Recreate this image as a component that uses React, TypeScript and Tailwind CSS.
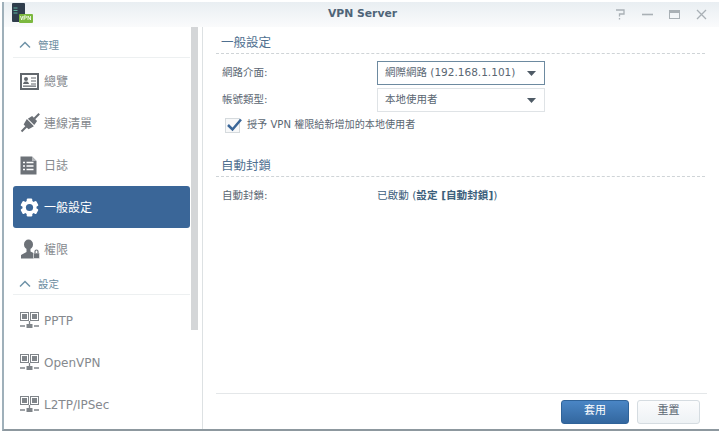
import { ReactNode } from "react";

const FONT = "font-['DejaVu_Sans','Noto_Sans_CJK_TC',sans-serif]";

function OverviewIcon() {
  return (
    <svg width="19" height="17" viewBox="0 0 19 17">
      <rect x="1" y="1" width="17" height="15" fill="#fff" stroke="#62676d" strokeWidth="2" />
      <circle cx="6" cy="6" r="2" fill="#62676d" />
      <path d="M3 11c.4-2 1.500-2.500 3-2.500s2.600.5 3 2.500z" fill="#62676d" />
      <path d="M11 5h5M11 8h5M11 11h5M3 13.200h13" stroke="#62676d" strokeWidth="1.200" />
    </svg>
  );
}

function PlugIcon() {
  return (
    <svg width="20" height="20" viewBox="0 0 20 20">
      <g transform="rotate(45 10 10)" fill="#6a6f75">
        <rect x="9" y="-3" width="2" height="7" />
        <path d="M6.500 3.500h7l1 5h-9z" />
        <path d="M5 9.500h10l-1.500 6h-7z" />
        <rect x="9" y="15" width="2" height="7" />
      </g>
    </svg>
  );
}

function LogIcon() {
  return (
    <svg width="17" height="19" viewBox="0 0 17 19">
      <path d="M0.500 0.500h11.500l4.500 4.500v13.500h-16z" fill="#6d7278" />
      <path d="M12 0.500l4.500 4.500h-4.500z" fill="#b5b8bb" />
      <path d="M6.500 6.500h7M6.500 10h7M6.500 13.500h7M3 6.500h2M3 10h2M3 13.500h2" stroke="#fff" strokeWidth="1.500" />
    </svg>
  );
}

function GearIcon() {
  return (
    <svg width="19" height="19" viewBox="0 0 19 19">
      <g fill="#fff">
        <circle cx="9.500" cy="9.500" r="7" />
        <rect x="6.700" y="0.500" width="5.600" height="18" rx="1.200" />
        <rect x="6.700" y="0.500" width="5.600" height="18" rx="1.200" transform="rotate(60 9.500 9.500)" />
        <rect x="6.700" y="0.500" width="5.600" height="18" rx="1.200" transform="rotate(120 9.500 9.500)" />
      </g>
      <circle cx="9.500" cy="9.500" r="3.600" fill="#3a6698" />
    </svg>
  );
}

function UserLockIcon() {
  return (
    <svg width="20" height="20" viewBox="0 0 20 20">
      <ellipse cx="8.500" cy="5.500" rx="4.500" ry="5" fill="#6d7278" />
      <path d="M6.500 9.500h4v3l3 1.500v5.500H1v-3.500l5.500-3z" fill="#6d7278" />
      <rect x="13.500" y="14" width="6" height="5.500" rx="0.500" fill="#6d7278" stroke="#fff" strokeWidth="0.500" />
      <path d="M15 14v-1.500a1.500 1.500 0 013 0V14" fill="none" stroke="#6d7278" strokeWidth="1.200" />
    </svg>
  );
}

function NetworkIcon() {
  return (
    <svg width="19" height="16" viewBox="0 0 19 16">
      <rect x="0.500" y="0.500" width="8" height="8" fill="#fff" stroke="#80858a" />
      <rect x="2" y="2" width="5" height="5" fill="#80858a" />
      <rect x="10.500" y="0.500" width="8" height="8" fill="#fff" stroke="#80858a" />
      <rect x="12" y="2" width="5" height="5" fill="#80858a" />
      <path d="M9.500 9v4M0 14h5M14 14h5" stroke="#80858a" strokeWidth="1.300" />
      <rect x="6.500" y="12" width="6" height="4" fill="#80858a" />
    </svg>
  );
}

function Chevron() {
  return (
    <svg width="12" height="8" viewBox="0 0 12 8" fill="none">
      <path d="M1 6.500l5-5 5 5" stroke="#6f93a8" strokeWidth="1.500" />
    </svg>
  );
}

function SideHeader({ label, className }: { label: string; className: string }) {
  return (
    <div className={"flex items-center gap-[7px] pl-[6px] border-b border-[#edf0f1] text-[10.500px] text-[#6b8da1] " + className}>
      <Chevron />
      <span className="pt-[2px]">{label}</span>
    </div>
  );
}

function SideItem({ icon, label, active }: { icon: ReactNode; label: string; active?: boolean }) {
  return (
    <div
      className={
        "h-[42px] flex items-center rounded-[3px] text-[12px] " +
        (active ? "bg-[#3a6698] text-white" : "text-[#85898e]")
      }
    >
      <div className="w-[31px] pl-[7px] flex justify-start shrink-0">{icon}</div>
      <span className="pt-[2px]">{label}</span>
    </div>
  );
}

function Section({ title, className }: { title: string; className: string }) {
  return (
    <div className={"flex items-center border-b border-dashed border-[#cfd4d7] text-[12.500px] text-[#4f7090] pl-[5px] " + className}>
      {title}
    </div>
  );
}

function Select({ value, focused }: { value: string; focused?: boolean }) {
  return (
    <div
      className={
        "w-[168px] h-[24px] flex items-center justify-between pl-[7px] pr-[8px] text-[10.500px] text-[#5a6672] border " +
        (focused ? "border-[#6d8aa0]" : "border-[#dfe3e6]")
      }
    >
      <span>{value}</span>
      <svg width="9" height="5" viewBox="0 0 9 5">
        <path d="M0 0h9L4.500 5z" fill="#4f5b66" />
      </svg>
    </div>
  );
}

export default function App() {
  return (
    <div className={"w-[720px] h-[433px] bg-white overflow-hidden pt-[2px] pl-[2px] pr-[1px] pb-[2px] " + FONT}>
      <div className="h-full flex flex-col border-l-2 border-b-2 border-[#9fb0ba] border-b-[#8d989f] bg-white">
        {/* title bar */}
        <div className="relative h-[25px] shrink-0 flex items-center justify-center pl-[2px] bg-gradient-to-b from-[#e9eef2] to-[#fafbfc]">
          <span className="text-[10.800px] font-bold text-[#4f6478]">VPN Server</span>
          <div className="absolute left-[8px] top-[1px]">
            <svg width="22" height="20" viewBox="0 0 22 20">
              <rect x="0" y="0" width="13" height="19" rx="1" fill="#2f3d4c" />
              <path d="M1.500 5h4M1.500 7.500h4M1.500 10h4" stroke="#5fb3a0" strokeWidth="1" />
              <rect x="7" y="11" width="14" height="9" rx="1" fill="#7cb83f" />
              <path d="M8.500 13l1.200 4 1.200-4M12 17v-4h1.500a1 1 0 010 2H12M16 17v-4l2.500 4v-4" stroke="#fff" strokeWidth="0.800" fill="none" />
            </svg>
          </div>
          <div className="absolute right-[12px] top-0 h-full flex items-center gap-[16px]">
            <svg width="11" height="11" viewBox="0 0 11 11" fill="none">
              <path d="M1 1h8v4H4.500v2.500M4.500 9v1.500" stroke="#a9b0b5" strokeWidth="1.300" />
            </svg>
            <svg width="11" height="11" viewBox="0 0 11 11">
              <path d="M0 5.500h11" stroke="#a9b0b5" strokeWidth="1.600" />
            </svg>
            <svg width="11" height="11" viewBox="0 0 11 11" fill="none">
              <rect x="0.500" y="1.500" width="10" height="8" stroke="#a9b0b5" />
              <rect x="0.500" y="1.500" width="10" height="2.500" fill="#a9b0b5" />
            </svg>
            <svg width="11" height="11" viewBox="0 0 11 11">
              <path d="M1 1l9 9M10 1l-9 9" stroke="#a9b0b5" strokeWidth="1.300" />
            </svg>
          </div>
        </div>

        <div className="flex-1 flex min-h-0">
          {/* sidebar */}
          <div className="w-[199px] shrink-0 flex border-r border-[#dde1e3] overflow-hidden">
            <div className="w-[177px] ml-[9px] shrink-0 pt-[6px]">
              <SideHeader label="管理" className="h-[25px]" />
              <div className="pt-[2px]">
                <SideItem icon={<OverviewIcon />} label="總覽" />
                <SideItem icon={<PlugIcon />} label="連線清單" />
                <SideItem icon={<LogIcon />} label="日誌" />
                <SideItem icon={<GearIcon />} label="一般設定" active />
                <SideItem icon={<UserLockIcon />} label="權限" />
              </div>
              <SideHeader label="設定" className="h-[22px] mt-[3px]" />
              <div className="pt-[4px]">
                <SideItem icon={<NetworkIcon />} label="PPTP" />
                <SideItem icon={<NetworkIcon />} label="OpenVPN" />
                <SideItem icon={<NetworkIcon />} label="L2TP/IPSec" />
              </div>
            </div>
            <div className="w-[7px] h-[303px] ml-[1px] shrink-0 bg-[#d4d6d8]" />
          </div>

          {/* content */}
          <div className="flex-1 min-w-0 flex flex-col pl-[13px] pr-[14px]">
            <div className="flex-1 pt-[7px]">
              <Section title="一般設定" className="h-[20px]" />
              <div className="pl-[6px] text-[10.500px] text-[#5a6672]">
                <div className="mt-[7px] flex items-center">
                  <span className="w-[155px]">網路介面:</span>
                  <Select value="網際網路 (192.168.1.101)" focused />
                </div>
                <div className="mt-[3px] flex items-center">
                  <span className="w-[155px]">帳號類型:</span>
                  <Select value="本地使用者" />
                </div>
                <div className="mt-[3px] ml-[3px] flex items-center gap-[7px] h-[20px] text-[10.100px]">
                  <div className="relative w-[15px] h-[15px] border border-[#d5dadd] bg-[#f7f8f9]">
                    <svg className="absolute -top-[2px] left-0" width="17" height="16" viewBox="0 0 17 16" fill="none">
                      <path d="M2 8l4.500 4.500L15 2.500" stroke="#3a6698" strokeWidth="2.500" />
                    </svg>
                  </div>
                  <span>授予 VPN 權限給新增加的本地使用者</span>
                </div>
              </div>
              <div className="mt-[21px]">
                <Section title="自動封鎖" className="h-[21px]" />
              </div>
              <div className="pl-[6px] mt-[11px] flex items-center text-[10.500px] text-[#5a6672]">
                <span className="w-[155px]">自動封鎖:</span>
                <span className="text-[#3d5f7c] text-[10.600px]">
                  已啟動 (<b className="font-bold">設定 [自動封鎖]</b>)
                </span>
              </div>
            </div>

            {/* footer */}
            <div className="h-[36px] shrink-0 mr-[-2px] border-t border-[#e4e7e9] flex items-center justify-end gap-[8px] pr-[7px]">
              <button className="w-[68px] h-[24px] rounded-[3px] bg-gradient-to-b from-[#4a86c5] to-[#33679f] border border-[#2f6399] text-[11px] text-white">
                套用
              </button>
              <button className="w-[63px] h-[24px] rounded-[3px] bg-gradient-to-b from-[#fbfcfd] to-[#eef2f5] border border-[#d5dce1] text-[11px] text-[#5a6672]">
                重置
              </button>
            </div>
          </div>
        </div>
      </div>
    </div>
  );
}
